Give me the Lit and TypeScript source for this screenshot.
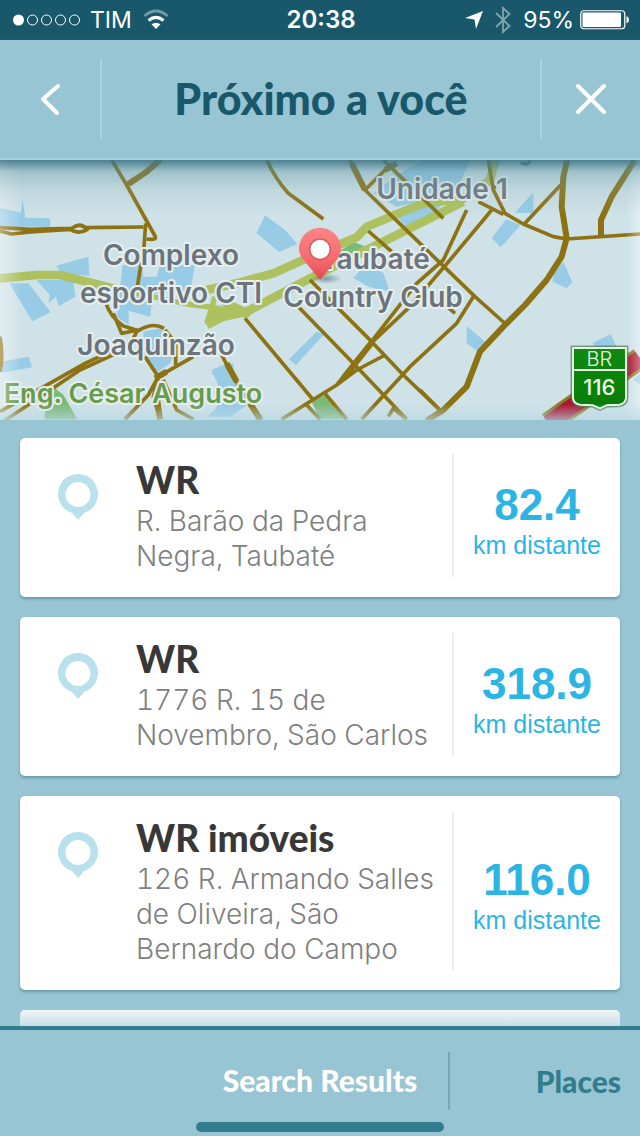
import { LitElement, html, css, svg } from "lit";
import { customElement, property, state } from "lit/decorators.js";

interface Place {
  name: string;
  address: string;
  km: string;
}

const PLACES: Place[] = [
  { name: "WR", address: "R. Barão da Pedra Negra, Taubaté", km: "82.4" },
  { name: "WR", address: "1776 R. 15 de Novembro, São Carlos", km: "318.9" },
  { name: "WR imóveis", address: "126 R. Armando Salles de Oliveira, São Bernardo do Campo", km: "116.0" },
];

@customElement("status-bar")
class StatusBar extends LitElement {
  static styles = css`
    :host {
      display: grid;
      grid-template-columns: 1fr auto 1fr;
      align-items: center;
      height: 40px;
      padding: 0 10px 0 12px;
      background: #18586a;
      color: #fff;
      font: 400 23px/40px Inter, "Liberation Sans", sans-serif;
    }
    .side { display: flex; align-items: center; gap: 8px; }
    .end { justify-content: flex-end; gap: 12px; }
    .power { display: flex; align-items: center; gap: 6px; }
    .time { font-weight: 600; font-size: 24px; }
    svg { display: block; flex: none; }
  `;
  render() {
    return html`
      <div class="side">
        <svg width="70" height="14" viewBox="0 0 70 14" aria-label="Signal">
          <circle cx="6.500" cy="7" r="5.500" fill="#fff" />
          ${[20.5, 34.5, 48.5, 62.5].map((x) => svg`<circle cx=${x} cy="7" r="5" fill="none" stroke="#fff" stroke-width="1" />`)}
        </svg>
        <span>TIM</span>
        <svg width="32" height="22" viewBox="0 0 32 22" aria-label="Wi-Fi">
          <path d="M4.500 7Q16-3 27.500 7" fill="none" stroke="#6f9ca8" stroke-width="2.800" />
          <path d="M8.500 11.500Q16 5.300 23.500 11.500" fill="none" stroke="#fff" stroke-width="3" />
          <path d="M11.500 15.300Q16 12 20.500 15.300L16 20Z" fill="#fff" />
        </svg>
      </div>
      <span class="time">20:38</span>
      <div class="side end">
        <svg width="18" height="18" viewBox="0 0 18 18" aria-label="Location"><path d="M18 0L11 18L9.500 8.500L0 7Z" fill="#fff" /></svg>
        <svg width="16" height="28" viewBox="0 0 16 28" aria-label="Bluetooth"><path d="M1 7L14.500 20L8 26V2L14.500 8L1 21" fill="none" stroke="#7fa5b0" stroke-width="1.800" /></svg>
        <div class="power">
          <span>95%</span>
          <svg width="50" height="20" viewBox="0 0 50 20" aria-label="Battery">
            <rect x=".75" y=".75" width="44" height="18" rx="3" fill="none" stroke="#fff" stroke-width="1.200" />
            <rect x="2.500" y="2.500" width="38.500" height="14.500" rx="1" fill="#fff" />
            <path d="M46.500 6Q49 7 49 9.750T46.500 13.500Z" fill="#fff" />
          </svg>
        </div>
      </div>
    `;
  }
}

@customElement("area-map")
class AreaMap extends LitElement {
  static styles = css`
    :host { display: block; height: 260px; background: #cee2e7; position: relative; overflow: hidden; }
    svg { display: block; width: 100%; height: 100%; }
    .road { fill: none; stroke: #8c7212; stroke-width: 11; stroke-linejoin: round; }
    .wide { stroke-width: 18; }
    .lane { fill: none; stroke: #adc25f; stroke-width: 26; stroke-linejoin: round; }
    .slim { stroke-width: 16; }
    .water { fill: #97cbe6; }
    .park { fill: #7cba78; }
    .label {
      font: 600 84px Inter, "Liberation Sans", sans-serif;
      fill: #6b747c;
      stroke: #e6eeee;
      stroke-width: 12;
      stroke-linejoin: round;
      paint-order: stroke;
      text-anchor: middle;
    }
    .green { fill: #689b4c; font-size: 81px; }
    .plate { font: 500 66px Inter, "Liberation Sans", sans-serif; fill: #e8fbe8; text-anchor: middle; }
    .thin { font-weight: 300; font-size: 60px; }
    .shade {
      position: absolute;
      inset: 0;
      pointer-events: none;
      background:
        linear-gradient(to bottom, #3f7686cc, #5f93a266 12px, #84abb633 30px, transparent 56px),
        linear-gradient(to top, #b8d8e3aa, transparent 16px),
        linear-gradient(to right, #ffffff66, transparent 22px),
        linear-gradient(to left, #ffffff66, transparent 14px);
    }
  `;
  render() {
    return html`
      <svg viewBox="0 0 1920 780" preserveAspectRatio="xMidYMid slice" role="img" aria-label="Mapa">
        <defs>
          <linearGradient id="pin" x1="0" y1="0" x2="0" y2="1"><stop offset="0" stop-color="#fb8585" /><stop offset=".6" stop-color="#f66b70" /><stop offset="1" stop-color="#e04a50" /></linearGradient>
          <linearGradient id="plate" x1="0" y1="0" x2="0" y2="1"><stop offset="0" stop-color="#108a10" /><stop offset="1" stop-color="#077d07" /></linearGradient>
          <radialGradient id="blur"><stop offset="0" stop-color="#35525c" stop-opacity=".5" /><stop offset="1" stop-color="#35525c" stop-opacity="0" /></radialGradient>
        </defs>
        <g transform="translate(0 -30)">
          <path class="water" d="M0 173L62 188L68 150L76 203L150 205V230H0ZM28 400H85L152 487L97 514ZM168 347L265 320L268 378L216 372L226 440L176 468L168 440L145 460L150 436L110 390H200ZM368 345H425L430 380H470L480 345H585L570 430H460L450 500L386 482V525L350 500ZM0 636L85 620L97 652L5 668ZM430 545L480 535L510 560L525 600L510 640L465 672L430 620ZM635 668L700 640V800H620L690 740Z" />
          <path class="park" d="M135 780L165 715L190 735L232 808H135Z" />
        </g>
        <g transform="translate(630 -30)">
          <path class="water" d="M165 196L225 240L262 282L208 306L140 250ZM237 628L320 545L342 553L258 645ZM470 340L520 370L540 425L480 412L430 384ZM490 130L560 75L640 30H780L740 120L650 210L585 228L560 200L650 150L560 170ZM5 660L40 645L75 700L120 760L60 800H0L40 740Z" />
          <path class="park" d="M305 755L345 735L410 808H330ZM350 330L430 275L468 290L440 325Z" />
        </g>
        <g transform="translate(1260 -30)">
          <path class="water" d="M285 188L340 127V190ZM215 265L258 208L302 225L242 292ZM400 370L430 335L457 397L440 415L398 395ZM140 528L195 575L180 608L140 580ZM518 578L572 553L590 590L530 600ZM640 690L660 670V702Z" />
        </g>

        <g transform="translate(0 -30)">
          <path class="lane" d="M0 385L110 375H180L340 415" />
          <path class="lane slim" d="M330 412L560 462L660 475M660 490L622 515L645 440" />
        </g>
        <g transform="translate(630 -30)">
          <path class="lane" d="M-10 420L80 400L190 370L290 325L440 262L470 230L640 160L760 145L840 90L856 30M-10 525L40 500L110 485L300 385L520 275L640 215L760 155" />
          <path class="lane" d="M0 480L110 490L40 455" />
        </g>
        <g transform="translate(0 -30)">
          <path class="road" d="M335 30L380 105L465 258Q472 272 440 267M380 105L440 65L482 30M437 220L432 290L412 410M0 233L90 238L215 235Q240 215 262 238Q235 255 210 238L90 246L35 252L0 243M250 233L430 231M318 460Q330 500 370 528L415 542Q460 515 492 535M340 490L365 550L413 540L395 575L255 640L0 785M360 605L240 660L10 815M435 620L475 680L445 735L375 808M475 680L580 620M475 680L460 740L480 808M490 690L530 780L580 808M495 540L527 580V645M0 560Q10 620 0 665" />
          <path class="road wide" d="M385 102L440 65L480 30M465 685L500 665M470 740L480 808" />
        </g>
        <g transform="translate(630 -30)">
          <path class="road" d="M170 30Q195 85 235 130L340 207M420 30L465 120L640 290L795 440L890 525M465 120L545 40M520 30L700 205M475 243L545 305M105 505L310 750M265 470L435 645L590 808M300 390L485 575L580 675L700 790M215 808L380 705L440 660L520 618M380 705L480 580L620 400L700 330L770 180M485 578L600 470L720 330L845 180M455 808L600 650L740 520L790 440M345 730L410 808M290 765L330 808M535 800L550 775L590 808M35 615L75 690L155 808M690 450L735 490" />
          <path class="road wide" d="M425 40L465 120M400 685L485 578M525 60L560 40M50 640L80 695M120 760L150 808" />
        </g>
        <g transform="translate(1260 -30)">
          <path class="road" d="M205 30L220 120L255 190L310 222L400 260L440 267L660 252M175 155L250 193M225 105L220 120M422 105L310 225M0 720L60 780" />
          <path class="road wide" d="M442 30L430 80L425 170L440 265L425 320L380 390L315 465L250 530L180 605L140 710L70 780L20 812M645 30L575 140L543 210V262" />
          <path d="M385 820L660 625" fill="none" stroke="#8c7a1c" stroke-width="66" />
          <path d="M385 820L660 625" fill="none" stroke="#aa1533" stroke-width="48" />
          <path d="M302 36Q318 50 331 32" fill="none" stroke="#6b747c" stroke-width="10" />
        </g>

        <text class="label" x="513" y="315">Complexo</text>
        <text class="label" x="513" y="429">esportivo CTI</text>
        <text class="label" x="468" y="585">Joaquinzão</text>
        <text class="label green" x="399" y="729">Eng. César Augusto</text>
        <text class="label" x="1326" y="117">Unidade 1</text>
        <text class="label" x="1125" y="327">Taubaté</text>
        <text class="label" x="1119" y="441">Country Club</text>

        <g transform="translate(1260 -30)">
          <path d="M455 590H622V745Q620 765 598 768L560 770L540 780L518 770L480 768Q457 765 455 745Z" fill="url(#plate)" stroke="#4c735299" stroke-width="7" />
          <path d="M459 594H618V745Q616 761 598 764L560 766L540 775L518 766L480 764Q461 761 459 745ZM459 660H618" fill="none" stroke="#e8f7e8" stroke-width="6" />
          <text class="plate thin" x="538" y="648">BR</text>
          <text class="plate" x="538" y="736">116</text>
        </g>
        <ellipse cx="978" cy="356" rx="48" ry="16" fill="url(#blur)" />
        <path d="M960 360L914 304Q897 286 897 266A63 63 0 0 1 1023 266Q1023 286 1006 304Z" fill="url(#pin)" />
        <circle cx="960" cy="268" r="31" fill="#fff" stroke="#dd5c60" stroke-width="5" />
      </svg>
      <div class="shade"></div>
    `;
  }
}

@customElement("place-card")
class PlaceCard extends LitElement {
  @property({ attribute: false }) place!: Place;
  static styles = css`
    :host { display: block; }
    .card {
      display: grid;
      grid-template-columns: 116px 1fr 168px;
      padding: 16px 0 20px;
      border-radius: 5px;
      background: #fff;
      box-shadow: 0 2px 3px #4a7d8c99;
      font-family: Inter, "Liberation Sans", sans-serif;
    }
    .icon { display: block; margin: 20px 0 0 38px; }
    .body { padding: 8px 8px 3px 0; }
    .name { margin: 0; font: 900 37px/36px Lato, sans-serif; color: #383838; }
    .address {
      margin: 6px 0 0;
      font-weight: 300;
      font-size: 28px;
      line-height: 35px;
      font-variant-numeric: tabular-nums;
      color: #808080;
    }
    .far {
      display: flex;
      flex-direction: column;
      align-items: center;
      justify-content: center;
      border-left: 2px solid #ebedef;
      padding-top: 14px;
      color: #2cb5e4;
    }
    .km { font: 700 44px/44px "Liberation Sans", sans-serif; }
    .unit { font: 400 25px/36px "Liberation Sans", sans-serif; }
  `;
  render() {
    const p = this.place;
    return html`
      <article class="card">
        <svg class="icon" width="40" height="46" viewBox="0 0 40 46" aria-hidden="true">
          <path fill="#b9e1ec" fill-rule="evenodd" d="M20 46L14 39A20 20 0 1 1 26 39ZM20 8A12.500 12.500 0 1 0 20 33A12.500 12.500 0 1 0 20 8Z" />
        </svg>
        <div class="body">
          <h2 class="name">${p.name}</h2>
          <p class="address">${p.address}</p>
        </div>
        <div class="far"><span class="km">${p.km}</span><span class="unit">km distante</span></div>
      </article>
    `;
  }
}

@customElement("app-root")
class AppRoot extends LitElement {
  @state() private tab = 0;
  static styles = css`
    :host {
      display: flex;
      flex-direction: column;
      height: 100vh;
      background: #97c5d3;
      overflow: hidden;
    }
    status-bar, .header, area-map, .tabs { flex: none; }
    button { border: 0; padding: 0; background: none; color: inherit; font: inherit; cursor: pointer; }
    .header {
      display: grid;
      grid-template-columns: 100px 1fr 98px;
      align-items: center;
      height: 120px;
      box-sizing: border-box;
      border-bottom: 2px solid #a6d2e0;
      box-shadow: 0 2px 8px #3d748599;
      z-index: 1;
    }
    .nav { display: grid; place-items: center; height: 80px; }
    .title {
      display: grid;
      place-items: center;
      margin: 0;
      height: 80px;
      border: solid #a9d5e3;
      border-width: 0 2px;
      color: #18586a;
      font: 900 43px/48px Lato, sans-serif;
    }
    .list {
      flex: 1;
      min-height: 0;
      overflow: hidden auto;
      scrollbar-width: none;
      display: flex;
      flex-direction: column;
      gap: 20px;
      padding: 18px 20px 0;
    }
    .list > * { flex: none; }
    .next { height: 80px; border-radius: 5px; background: linear-gradient(#f2f7f9, #c6dde5 16px); }
    .tabs {
      display: grid;
      grid-template-columns: 1fr 256px 1fr;
      height: 110px;
      box-sizing: border-box;
      border-top: 4px solid #327c8e;
      font: 900 30px/36px Lato, sans-serif;
      color: #327c8e;
    }
    .tab { display: grid; grid-template-rows: 1fr 10px; justify-items: center; align-items: center; padding: 8px 4px 4px; }
    .current { grid-column: 2; color: #fff; }
    .bar { width: 100%; height: 10px; border-radius: 5px; background: #327c8e; }
    .other { display: flex; align-items: center; justify-content: flex-end; height: 58px; margin-top: 22px; padding-right: 19px; border-left: 2px solid #75a9b8; }
  `;
  render() {
    return html`
      <status-bar></status-bar>
      <header class="header">
        <button class="nav" aria-label="Voltar">
          <svg width="24" height="34" viewBox="0 0 24 34"><path d="M20 4L5 17L19 31" fill="none" stroke="#fff" stroke-width="4" stroke-linecap="round" stroke-linejoin="round" /></svg>
        </button>
        <h1 class="title">Próximo a você</h1>
        <button class="nav" aria-label="Fechar">
          <svg width="34" height="34" viewBox="0 0 34 34"><path d="M4 4L30 30M30 4L4 30" fill="none" stroke="#fff" stroke-width="4" stroke-linecap="round" /></svg>
        </button>
      </header>
      <area-map></area-map>
      <main class="list">
        ${PLACES.map((p) => html`<place-card .place=${p}></place-card>`)}
        <div class="next"></div>
      </main>
      <nav class="tabs">
        <button class="tab current" @click=${() => (this.tab = 0)}><span>Search Results</span><span class="bar"></span></button>
        <button class="other" @click=${() => (this.tab = 1)}>Places</button>
      </nav>
    `;
  }
}
